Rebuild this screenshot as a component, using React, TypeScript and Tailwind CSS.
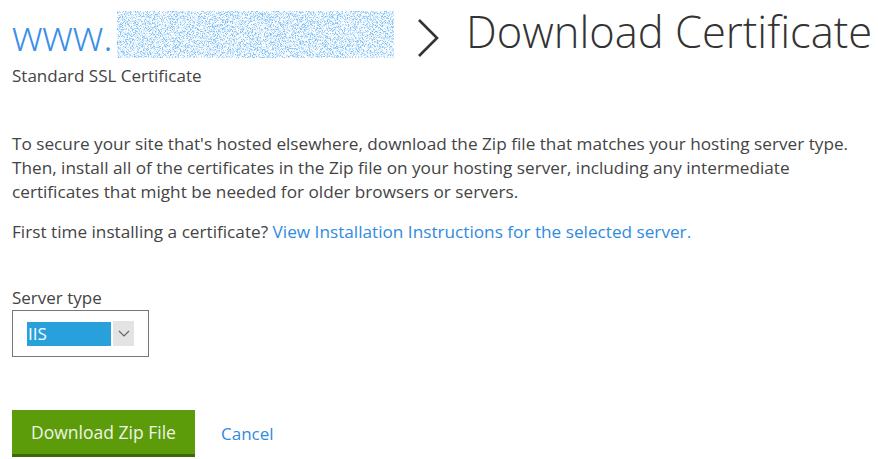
const font = { fontFamily: '"Open Sans", "Noto Sans", sans-serif' };

const Blurred = () => (
    <svg width="277" height="47" className="block">
        <filter id="speckle">
            <feTurbulence type="fractalNoise" baseFrequency="1.4" numOctaves="1" seed="3" />
            <feColorMatrix values="0 0 0 0 0.2  0 0 0 0 0.52  0 0 0 0 0.93  4 0 0 0 -1.75" />
        </filter>
        <rect width="277" height="47" fill="#ffffff" />
        <rect width="277" height="47" filter="url(#speckle)" />
    </svg>
);

const Chevron = () => (
    <svg width="22" height="40" viewBox="0 0 22 40" className="block">
        <polyline points="2,2 20,20 2,38" fill="none" stroke="#333" strokeWidth="2.6" />
    </svg>
);

const CaretDown = () => (
    <svg width="12" height="8" viewBox="0 0 12 8" className="block">
        <polyline points="1,1 6,6 11,1" fill="none" stroke="#666" strokeWidth="1.2" />
    </svg>
);

export default function App() {
    return (
        <div className="w-[878px] h-[459px] bg-white text-[#444] overflow-hidden pl-[12px]" style={font}>
            {/* title row */}
            <div className="flex items-center h-[64px]">
                <span className="text-[42px] font-light text-[#3b8ee8] leading-none mt-[6px]">www.</span>
                <div className="ml-[4px] mt-[4px]">
                    <Blurred />
                </div>
                <div className="ml-[23px] mt-[12px]">
                    <Chevron />
                </div>
                <span className="ml-[27px] text-[43.5px] font-light text-[#333] leading-none">Download Certificate</span>
            </div>
            <div className="mt-[2px] text-[17px] text-[#444] leading-5">Standard SSL Certificate</div>

            <div className="mt-[46px] text-[17.2px] leading-6 whitespace-nowrap">
                <p>
                    To secure your site that's hosted elsewhere, download the Zip file that matches your hosting server type.
                    <br />
                    Then, install all of the certificates in the Zip file on your hosting server, including any intermediate
                    <br />
                    certificates that might be needed for older browsers or servers.
                </p>
                <p className="mt-[16px]">
                    First time installing a certificate?{' '}
                    <a className="text-[#2f8be0]">View Installation Instructions for the selected server.</a>
                </p>
            </div>

            <div className="mt-[42px] text-[17px] leading-6">Server type</div>
            <div className="w-[137px] h-[47px] border border-[#777] flex items-center pl-[14px]">
                <div className="w-[84px] h-[24px] bg-[#28a0dc] text-white text-[17px] leading-6 pl-[1px]">IIS</div>
                <div className="ml-[2px] w-[21px] h-[25px] bg-[#e3e3e3] flex items-center justify-center">
                    <CaretDown />
                </div>
            </div>

            <div className="mt-[53px] flex items-center">
                <button className="w-[183px] h-[47px] bg-[#5c9b0a] border-b-[3px] border-[#3c6a05] text-[#eef4e6] text-[17.5px]">
                    Download Zip File
                </button>
                <a className="ml-[26px] text-[17px] text-[#2f8be0]">Cancel</a>
            </div>
        </div>
    );
}
